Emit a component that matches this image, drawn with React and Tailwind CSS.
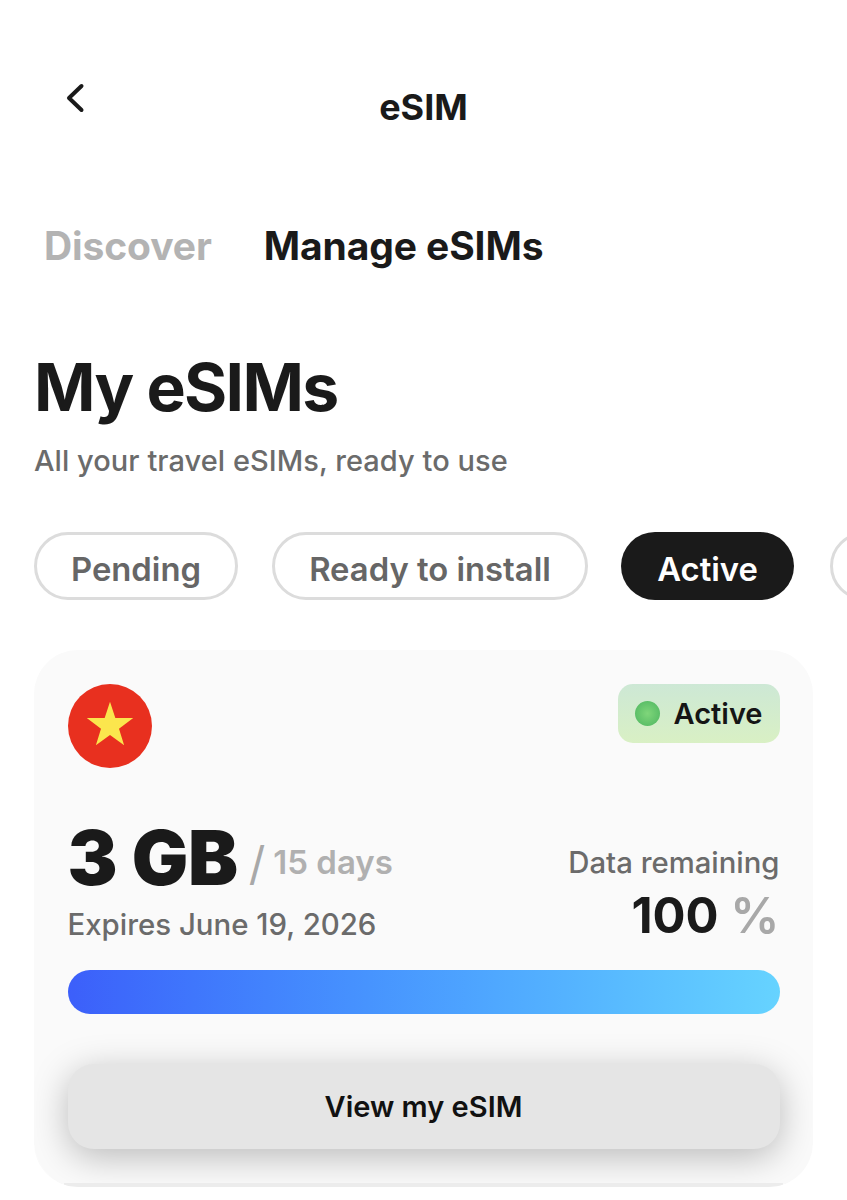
export default function App() {
  return (
    <div className="w-[847px] h-[1200px] bg-white overflow-hidden text-[#1a1a1a] font-['Inter','Liberation_Sans',sans-serif]">
      <header className="relative h-[214px] pt-[80px]">
        <div className="flex justify-center pt-[7px] text-[36px] leading-[40px] font-bold">eSIM</div>
        <svg className="absolute left-[62px] top-[80px]" width="26" height="36" viewBox="0 0 26 36" fill="none" stroke="#1a1a1a" strokeWidth="4" strokeLinecap="round" strokeLinejoin="round">
          <path d="M19.5 6 L7 18 L19.5 30" />
        </svg>
      </header>
      <nav className="flex gap-[52px] pl-[44px] h-[64px] items-center text-[39px] font-bold tracking-[-0.1px]">
        <span className="text-[#b3b3b3]">Discover</span>
        <span>Manage eSIMs</span>
      </nav>
      <section className="px-[34px] pt-[70px]">
        <h1 className="text-[66px] leading-[78px] font-bold tracking-[-1.7px]">My eSIMs</h1>
        <p className="mt-[17px] text-[29px] leading-[36px] font-medium text-[#6b6b6b] tracking-[0.05px]">All your travel eSIMs, ready to use</p>
      </section>
      <div className="flex pl-[34px] pt-[53px] w-[900px] text-[32.8px] font-semibold">
        <div className="h-[68px] w-[204px] shrink-0 flex items-center justify-center pt-[8px] rounded-full border-[3px] border-[#dcdcdc] text-[#666666]">Pending</div>
        <div className="ml-[34px] h-[68px] w-[316px] shrink-0 flex items-center justify-center pt-[8px] rounded-full border-[3px] border-[#dcdcdc] text-[#666666]">Ready to install</div>
        <div className="ml-[33px] h-[68px] w-[173px] shrink-0 flex items-center justify-center pt-[8px] rounded-full bg-[#1a1a1a] text-white">Active</div>
        <div className="ml-[36px] h-[68px] w-[100px] shrink-0 rounded-full border-[3px] border-[#dcdcdc]"></div>
      </div>
      <article className="relative overflow-hidden mx-[34px] mt-[50px] h-[537px] rounded-[44px] bg-[#fafafa] px-[33.5px] pt-[34px]">
        <div className="flex justify-between items-start">
          <svg width="84" height="84" viewBox="0 0 85 85">
            <circle cx="42.5" cy="42.5" r="42.5" fill="#e8301f" />
            <path d="M42.5 18 L47.9 34.5 L66 34.5 L51.6 45.2 L56.8 62 L42.5 51.6 L28.2 62 L33.4 45.2 L19 34.5 L37.1 34.5 Z" fill="#fbe64d" />
          </svg>
          <div className="h-[59px] w-[162px] flex items-center gap-[14px] pl-[17px] rounded-[15px] bg-gradient-to-b from-[#cde8d5] to-[#d9f0c4] text-[29px] font-semibold text-[#151515]">
            <span className="w-[25px] h-[25px] rounded-full bg-[radial-gradient(circle,#7fd67a,#4db560)]"></span>
            <span>Active</span>
          </div>
        </div>
        <div className="flex justify-between items-end mt-[45px]">
          <div>
            <div className="flex items-end h-[90px]">
              <span className="text-[75px] leading-[90px] font-black tracking-[-0.4px]">3 GB</span>
              <span className="ml-[11px] mb-[12px] text-[46px] leading-[56px] font-normal text-[#a8a8a8]">/</span>
              <span className="ml-[8px] mb-[21px] text-[33px] leading-[40px] font-semibold text-[#b0b0b0]">15 days</span>
            </div>
            <div className="mt-[4px] text-[29.4px] leading-[36px] font-medium text-[#6b6b6b]">Expires June 19, 2026</div>
          </div>
          <div className="text-right -mb-[2px]">
            <div className="text-[29.3px] leading-[36px] font-medium text-[#6b6b6b]">Data remaining</div>
            <div className="mt-[6px] text-[49px] leading-[58px] font-bold">100 <span className="text-[#a8a8a8] font-semibold">%</span></div>
          </div>
        </div>
        <div className="mt-[27px] h-[44px] rounded-full bg-gradient-to-r from-[#3c5ffa] to-[#66d3ff]"></div>
        <div className="mt-[50px] h-[85px] flex items-center justify-center rounded-[26px] bg-[#e5e5e5] shadow-[0_8px_36px_rgba(0,0,0,0.26)] text-[29px] font-semibold text-[#111111]">View my eSIM</div>
        <div className="absolute bottom-0 left-[30px] right-[30px] h-[4px] bg-[#ececec]"></div>
      </article>
    </div>
  );
}
